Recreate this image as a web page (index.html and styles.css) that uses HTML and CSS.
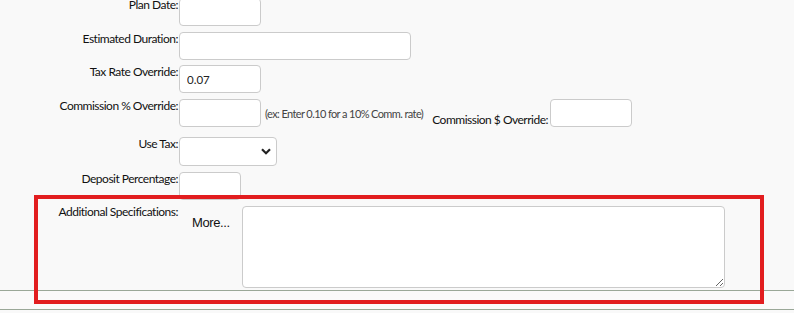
FILE: index.html
```html
<!DOCTYPE html>
<html lang="en">
<head>
    <meta charset="UTF-8">
    <title>Plan Details</title>
    <link rel="stylesheet" href="styles.css">
</head>
<body>
    <div class="form">
        <div class="row">
            <label class="lbl">Plan Date:</label>
            <input type="text" class="inp inp-short">
        </div>
        <div class="row row-tight">
            <label class="lbl">Estimated Duration:</label>
            <input type="text" class="inp inp-wide">
        </div>
        <div class="row">
            <label class="lbl">Tax Rate Override:</label>
            <input type="text" class="inp inp-short" value="0.07">
        </div>
        <div class="row row-loose">
            <label class="lbl">Commission % Override:</label>
            <input type="text" class="inp inp-short">
            <span class="hint">(ex: Enter 0.10 for a 10% Comm. rate)</span>
            <label class="lbl-inline">Commission $ Override:</label>
            <input type="text" class="inp inp-short">
        </div>
        <div class="row">
            <label class="lbl">Use Tax:</label>
            <span class="select-wrap">
                <select class="sel">
                    <option></option>
                    <option>Yes</option>
                    <option>No</option>
                </select>
                <svg class="chev" width="10" height="7" viewBox="0 0 10 7">
                    <path d="M1 1.2 L5 5.2 L9 1.2" fill="none" stroke="#222" stroke-width="2.2"/>
                </svg>
            </span>
        </div>
        <div class="row row-tight">
            <label class="lbl">Deposit Percentage:</label>
            <input type="text" class="inp inp-tiny">
        </div>
        <div class="row row-last">
            <label class="lbl">Additional Specifications:</label>
            <div class="more-cell"><a class="more">More...</a></div>
            <textarea class="notes"></textarea>
        </div>
    </div>
    <div class="divider"></div>

    <!-- highlight marker over the specs row -->
    <div class="highlight"></div>
</body>
</html>
```

FILE: styles.css
```css
/* Basic styling */
body {
    margin: 0;
    padding: 0;
    background-color: #f9f9f9;
    font-family: Lato, "Open Sans", sans-serif;
    font-size: 12px;
    color: #111;
    overflow: hidden;
}
.form {
    margin-top: -2px;
}
.row {
    display: flex;
    align-items: flex-start;
    margin-bottom: 6px;
}
.row-tight {
    margin-bottom: 5px;
}
.row-loose {
    margin-bottom: 10px;
}
.row-last {
    margin-bottom: 2px;
}
.lbl {
    width: 178px;
    margin-right: 1px;
    text-align: right;
    line-height: 13px;
    letter-spacing: -0.5px;
    flex-shrink: 0;
}
.inp {
    box-sizing: border-box;
    height: 28px;
    background-color: white;
    border: 1px solid #cbcbcb;
    border-radius: 4px;
    padding: 0 7px;
    font-family: Lato, sans-serif;
    font-size: 11.5px;
    color: #222;
}
.inp:focus {
    outline: none;
}
.inp-short {
    width: 82px;
}
.inp-wide {
    width: 232px;
}
.inp-tiny {
    width: 62px;
}
.hint {
    align-self: center;
    margin-left: 4px;
    font-size: 11px;
    color: #444;
    letter-spacing: -0.6px;
}
.lbl-inline {
    align-self: flex-end;
    margin-left: 9px;
    margin-right: 2px;
    line-height: 14px;
    letter-spacing: -0.5px;
}
.select-wrap {
    position: relative;
    display: inline-block;
}
.sel {
    box-sizing: border-box;
    width: 98px;
    height: 29px;
    background-color: white;
    border: 1px solid #cbcbcb;
    border-radius: 4px;
    appearance: none;
    -webkit-appearance: none;
}
.chev {
    position: absolute;
    right: 6px;
    top: 11px;
    pointer-events: none;
}
.more-cell {
    width: 50px;
    padding-left: 13px;
    padding-top: 10px;
}
.more {
    font-family: "Liberation Sans", Arial, sans-serif;
    font-size: 13px;
    letter-spacing: -0.4px;
    color: #111;
    cursor: pointer;
}
.notes {
    box-sizing: border-box;
    width: 483px;
    height: 82px;
    margin: 1px 0 0 0;
    background-color: white;
    border: 1px solid #cbcbcb;
    border-radius: 4px;
}
.divider {
    height: 18px;
    background-color: #fafafa;
    border-top: 1px solid #9aa898;
    border-bottom: 1px solid #9aa898;
}
.highlight {
    position: absolute;
    left: 34px;
    top: 195px;
    width: 722px;
    height: 101px;
    border: 4px solid #e21d1f;
}
```
